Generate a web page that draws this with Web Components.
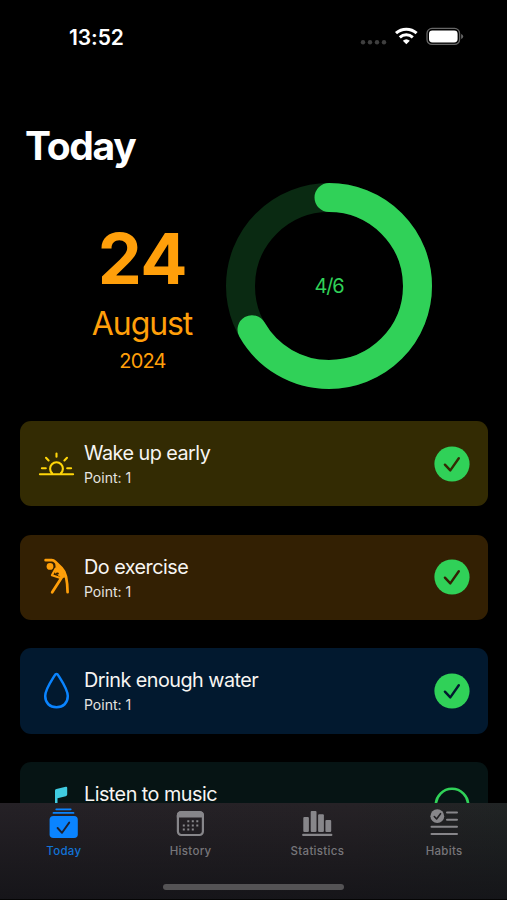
<!DOCTYPE html>
<html lang="en">
<head>
<meta charset="utf-8">
<title>Today</title>
<style>
html, body {
	margin: 0;
	height: 100%;
	background: #000;
}
body {
	font-family: Inter, "Liberation Sans", sans-serif;
	color: #fff;
	overflow: hidden;
}
</style>
</head>
<body>
<habit-app>
	<status-bar slot="status" time="13:52"></status-bar>
	<page-title>Today</page-title>
	<day-summary day="24" month="August" year="2024" done="4" total="6"></day-summary>
	<habit-card icon="sunrise" color="#ffd60a" fill="#332b03" points="1" done>Wake up early</habit-card>
	<habit-card icon="stretch" color="#ff9f0a" fill="#332003" points="1" done>Do exercise</habit-card>
	<habit-card icon="drop" color="#0a84ff" fill="#02192f" points="1" done>Drink enough water</habit-card>
	<habit-card icon="music" color="#40cbe0" fill="#061414" points="1">Listen to music</habit-card>
	<tab-bar slot="tabs">
		<tab-item icon="today" active>Today</tab-item>
		<tab-item icon="history">History</tab-item>
		<tab-item icon="statistics">Statistics</tab-item>
		<tab-item icon="habits">Habits</tab-item>
	</tab-bar>
</habit-app>
<script>
const habitIcons = {
	sunrise: `
		<g fill="none" stroke="currentColor" stroke-width="2.1" stroke-linecap="round">
			<path d="M2.9 31.2H36.1"/>
			<path d="M15.2 30.4A6.4 6.4 0 1 1 23.8 30.4"/>
			<path d="M19.5 10.6V13.8M9 14.8L11.6 17.4M30 14.8L27.4 17.4M4.9 25.2H8.8M34.1 25.2H30.2"/>
		</g>`,
	stretch: `
		<g fill="none" stroke="currentColor" stroke-linecap="round" stroke-linejoin="round">
			<path d="M8.6 4.2H14.8Q16.6 4.2 18.2 5.7L24.6 12Q28 15.6 29 20.5Q30.4 27 30.6 36.2" stroke-width="2.7"/>
			<path d="M25 21L15.2 36.2" stroke-width="2.8"/>
			<path d="M18.6 12.5L14.9 19.3L23.5 22" stroke-width="2.1"/>
			<path d="M18.8 7.6L19.2 12.4L18 16.5L24.5 21.5L28 21L25.5 14Z" fill="currentColor" stroke-width="1"/>
		</g>
		<circle cx="13" cy="10.4" r="3.4" fill="currentColor"/>
		<ellipse cx="20.4" cy="17.6" rx="1.5" ry="1.1" fill="var(--fill)"/>`,
	drop: `<path d="M19.5 4.1C18.7 4.1 18 4.9 17.4 5.9C13 12.9 8.2 19.9 8.2 26.1C8.2 33 12.8 37.2 19.5 37.2S30.8 33 30.8 26.1C30.8 19.9 26 12.9 21.6 5.9C21 4.9 20.3 4.1 19.5 4.1Z" fill="none" stroke="currentColor" stroke-width="2.5"/>`,
	music: `
		<path d="M18 6.6Q18 5.2 19.4 4.9L28.8 2.8Q30.2 2.5 30.2 3.8V10.6Q30.2 11.9 28.8 12.3L20.5 14.3V31H18Z" fill="currentColor"/>
		<ellipse cx="15.6" cy="31" rx="5" ry="4.2" fill="currentColor"/>`
}

const tabIcons = {
	today: `
		<g fill="currentColor">
			<rect x="10.4" y="2.6" width="16.2" height="1.6" rx=".8"/>
			<rect x="7.6" y="6" width="21.8" height="1.8" rx=".9"/>
			<rect x="4.6" y="9.9" width="28.2" height="22.2" rx="3.8"/>
		</g>
		<path d="M12.6 22L17 26.8L24.2 16.6" fill="none" stroke="#1c2030" stroke-width="1.9" stroke-linecap="round" stroke-linejoin="round"/>`,
	history: `
		<rect x="5.9" y="6.2" width="25" height="22.8" rx="3.4" fill="none" stroke="currentColor" stroke-width="2.2"/>
		<path d="M4.8 11.6V9.4Q4.8 5.2 9 5.2H27.8Q32 5.2 32 9.4V11.6Z" fill="currentColor"/>
		<path d="M15.3 15.3H28.4M10.8 19.4H28.4M10.8 23.6H24.3" fill="none" stroke="currentColor" stroke-width="2" stroke-dasharray="2 2.5"/>`,
	statistics: `
		<g fill="currentColor">
			<rect x="4.3" y="11" width="5.6" height="15" rx="1"/>
			<rect x="11.7" y="5" width="5.8" height="21" rx="1"/>
			<rect x="19.1" y="8.2" width="5.8" height="17.8" rx="1"/>
			<rect x="26.4" y="14" width="5.8" height="12" rx="1"/>
			<rect x="3.1" y="27.8" width="30.3" height="2.1" rx="1"/>
		</g>`,
	habits: `
		<circle cx="11.3" cy="10.2" r="6.9" fill="currentColor"/>
		<path d="M8.3 10.5L10.6 13L14.5 7.7" fill="none" stroke="#222124" stroke-width="1.6" stroke-linecap="round" stroke-linejoin="round"/>
		<path d="M21 6.6H31M21 13.8H31M5.5 20.7H31M5.5 27.9H31" fill="none" stroke="currentColor" stroke-width="2" stroke-linecap="round"/>`
}

class HabitApp extends HTMLElement {
	constructor() {
		super()
		this.attachShadow({ mode: "open" })
		this.shadowRoot.innerHTML = `
		<slot name="status"></slot>
		<main><slot></slot></main>
		<slot name="tabs"></slot>
		<style>
		:host {
			display: flex;
			flex-direction: column;
			width: 507px;
			height: 900px;
			overflow: hidden;
			background: #000;
		}
		main {
			flex: 1;
			min-height: 0;
			overflow: hidden;
			box-sizing: border-box;
			padding: 0 19px 0 20px;
		}
		</style>
		`
	}
}

class StatusBar extends HTMLElement {
	constructor() {
		super()
		this.attachShadow({ mode: "open" })
	}
	connectedCallback() {
		this.shadowRoot.innerHTML = `
		<time>${this.getAttribute("time")}</time>
		<svg width="104" height="22" viewBox="0 0 104 22">
			<g fill="#3f3f3f">
				<circle cx="3" cy="16.2" r="2.2"/>
				<circle cx="10" cy="16.2" r="2.2"/>
				<circle cx="17" cy="16.2" r="2.2"/>
				<circle cx="24" cy="16.2" r="2.2"/>
			</g>
			<g fill="none" stroke="#fff" stroke-width="3">
				<path d="M36 7.2A15.2 15.2 0 0 1 56.6 7.2"/>
				<path d="M39.8 11.3A9.7 9.7 0 0 1 52.8 11.3"/>
			</g>
			<path d="M46.3 18.2L42.8 14.7Q46.3 11.7 49.8 14.7Z" fill="#fff"/>
			<rect x="67" y="2.4" width="32.6" height="16" rx="5" fill="none" stroke="#666" stroke-width="1.3"/>
			<rect x="69" y="4.4" width="28.6" height="12" rx="3.4" fill="#fff"/>
			<path d="M101.1 7.9Q103.2 8.6 103.2 10.5T101.1 13.1Z" fill="#666"/>
		</svg>
		<style>
		:host {
			display: flex;
			justify-content: space-between;
			align-items: center;
			box-sizing: border-box;
			height: 74px;
			padding: 0 43px 0 69px;
		}
		time {
			font-size: 21px;
			font-weight: 600;
			letter-spacing: -0.1px;
		}
		</style>
		`
	}
}

class PageTitle extends HTMLElement {
	constructor() {
		super()
		this.attachShadow({ mode: "open" })
		this.shadowRoot.innerHTML = `
		<h1><slot></slot></h1>
		<style>
		:host {
			display: block;
			padding: 48px 0 0 5px;
		}
		h1 {
			margin: 0;
			font-size: 39px;
			line-height: 48px;
			font-weight: 700;
			letter-spacing: -1.3px;
		}
		</style>
		`
	}
}

class DaySummary extends HTMLElement {
	constructor() {
		super()
		this.attachShadow({ mode: "open" })
	}
	connectedCallback() {
		const done = Number(this.getAttribute("done"))
		const total = Number(this.getAttribute("total"))
		this.shadowRoot.innerHTML = `
		<div class="date">
			<span class="day">${this.getAttribute("day")}</span>
			<span class="month">${this.getAttribute("month")}</span>
			<span class="year">${this.getAttribute("year")}</span>
		</div>
		<progress-ring done="${done}" total="${total}">${done}/${total}</progress-ring>
		<style>
		:host {
			display: flex;
			align-items: center;
			height: 206px;
			margin: 12.5px 0 32.5px;
			padding-left: 71px;
			gap: 33px;
		}
		.date {
			display: flex;
			flex-direction: column;
			align-items: center;
			width: 102px;
			padding-top: 20px;
			color: #ff9f0a;
		}
		.day {
			font-size: 70px;
			line-height: 82px;
			font-weight: 700;
			padding-left: 1px;
			letter-spacing: -0.5px;
		}
		.month {
			font-size: 32px;
			line-height: 40px;
			margin-top: 4px;
			letter-spacing: -1.1px;
		}
		.year {
			font-size: 20px;
			line-height: 26px;
			margin-top: 4px;
			padding-left: 1px;
			letter-spacing: -0.8px;
		}
		</style>
		`
	}
}

class ProgressRing extends HTMLElement {
	constructor() {
		super()
		this.attachShadow({ mode: "open" })
	}
	connectedCallback() {
		const ratio = this.getAttribute("done") / this.getAttribute("total")
		const length = 2 * Math.PI * 88.5
		this.shadowRoot.innerHTML = `
		<svg width="206" height="206" viewBox="0 0 206 206" fill="none" stroke-width="29">
			<circle cx="103" cy="103" r="88.5" stroke="#0a2a12"/>
			<circle cx="103" cy="103" r="88.5" stroke="#30d158" stroke-linecap="round"
				stroke-dasharray="${length * ratio} ${length}" transform="rotate(-90 103 103)"/>
		</svg>
		<span><slot></slot></span>
		<style>
		:host {
			display: grid;
			place-items: center;
			color: #30d158;
			font-size: 20px;
			letter-spacing: -1.1px;
		}
		svg, span {
			grid-area: 1 / 1;
		}
		</style>
		`
	}
}

class HabitCard extends HTMLElement {
	constructor() {
		super()
		this.attachShadow({ mode: "open" })
	}
	connectedCallback() {
		const fill = this.getAttribute("fill")
		const mark = this.hasAttribute("done")
			? `<circle cx="18" cy="18" r="17.6" fill="#30d158"/>
				<path d="M10.9 18.7L16.3 24.4L24.8 12.2" fill="none" stroke="${fill}" stroke-width="2.4" stroke-linecap="round" stroke-linejoin="round"/>`
			: `<circle cx="18" cy="18" r="16.2" fill="none" stroke="#30d158" stroke-width="2.6"/>`
		this.shadowRoot.innerHTML = `
		<svg class="icon" width="39" height="42" viewBox="0 0 39 42">${habitIcons[this.getAttribute("icon")]}</svg>
		<div class="text">
			<span class="name"><slot></slot></span>
			<span class="points">Point: ${this.getAttribute("points")}</span>
		</div>
		<svg width="36" height="36" viewBox="0 0 36 36">${mark}</svg>
		<style>
		:host {
			--fill: ${fill};
			display: flex;
			align-items: center;
			box-sizing: border-box;
			height: 85.2px;
			margin-bottom: 28.5px;
			padding: 0 18px 0 17px;
			border-radius: 11px;
			background: var(--fill);
		}
		.icon {
			color: ${this.getAttribute("color")};
		}
		.text {
			flex: 1;
			display: flex;
			flex-direction: column;
			margin-left: 8px;
		}
		.name {
			font-size: 19.8px;
			line-height: 26px;
			letter-spacing: -0.52px;
			color: #f7f5f2;
		}
		.points {
			font-size: 14px;
			line-height: 18px;
			margin-top: 3px;
			color: #e6e4e0;
		}
		</style>
		`
	}
}

class TabBar extends HTMLElement {
	constructor() {
		super()
		this.attachShadow({ mode: "open" })
		this.shadowRoot.innerHTML = `
		<nav><slot></slot></nav>
		<div class="home"></div>
		<style>
		:host {
			display: flex;
			flex-direction: column;
			align-items: center;
			justify-content: space-between;
			box-sizing: border-box;
			height: 97px;
			padding-bottom: 9px;
			border-bottom: 1px solid #050505;
			background:
				linear-gradient(to bottom, transparent, rgba(18, 18, 22, .8)),
				linear-gradient(to right, #252126, #262226 70%, #202424);
		}
		nav {
			display: flex;
			width: 100%;
		}
		.home {
			width: 181px;
			height: 6px;
			border-radius: 3px;
			background: #545355;
		}
		</style>
		`
	}
}

class TabItem extends HTMLElement {
	constructor() {
		super()
		this.attachShadow({ mode: "open" })
	}
	connectedCallback() {
		this.shadowRoot.innerHTML = `
		<svg width="36" height="36" viewBox="0 0 36 36">${tabIcons[this.getAttribute("icon")]}</svg>
		<span><slot></slot></span>
		<style>
		:host {
			flex: 1;
			display: flex;
			flex-direction: column;
			align-items: center;
			padding-top: 3px;
			color: #87868a;
		}
		:host([active]) {
			color: #0a84ff;
		}
		span {
			font-size: 11.5px;
			line-height: 18px;
			font-weight: 500;
			padding-left: 1px;
			letter-spacing: 0.3px;
		}
		:host([active]) span {
			color: #1273d6;
		}
		:host(:not([active])) span {
			color: #77767a;
		}
		</style>
		`
	}
}

customElements.define("habit-app", HabitApp)
customElements.define("status-bar", StatusBar)
customElements.define("page-title", PageTitle)
customElements.define("progress-ring", ProgressRing)
customElements.define("day-summary", DaySummary)
customElements.define("habit-card", HabitCard)
customElements.define("tab-bar", TabBar)
customElements.define("tab-item", TabItem)
</script>
</body>
</html>
